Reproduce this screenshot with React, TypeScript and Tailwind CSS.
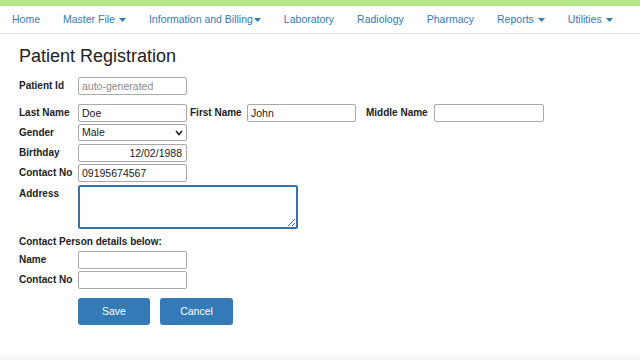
import React from "react";

const navItems = [
  { label: "Home", caret: false },
  { label: "Master File", caret: true },
  { label: "Information and Billing", caret: true, tight: true },
  { label: "Laboratory", caret: false },
  { label: "Radiology", caret: false },
  { label: "Pharmacy", caret: false },
  { label: "Reports", caret: true },
  { label: "Utilities", caret: true },
];

function Caret() {
  return (
    <svg width="7" height="4" viewBox="0 0 7 4" className="inline-block">
      <path d="M0 0 L7 0 L3.5 4 Z" fill="#337ab7" />
    </svg>
  );
}

function Field({ value = "", placeholder, className = "" }: { value?: string; placeholder?: string; className?: string }) {
  return (
    <input
      readOnly
      defaultValue={value}
      placeholder={placeholder}
      className={`h-[18px] rounded-[2px] border border-[#a9a9a9] bg-white px-[3px] text-[10.5px] text-[#222] placeholder:text-[#8a8a8a] outline-none ${className}`}
    />
  );
}

function Label({ children, className = "" }: { children: React.ReactNode; className?: string }) {
  return <div className={`pt-[2px] text-[10px] font-bold leading-[14px] text-[#222] ${className}`}>{children}</div>;
}

export default function App() {
  return (
    <div className="flex min-h-screen flex-col bg-white font-['Liberation_Sans',Arial,sans-serif]">
      <div className="h-[6px] bg-[#b4e68c]" />
      <nav className="flex h-[28px] items-center gap-[23px] border-b border-[#e6e6e6] pl-[12px] pt-[1px] text-[10.5px] text-[#337ab7]">
        {navItems.map((item) => (
          <span key={item.label} className="flex items-center">
            {item.label}
            {item.caret && <span className={item.tight ? "ml-[1px]" : "ml-[4px]"}><Caret /></span>}
          </span>
        ))}
      </nav>

      <main className="flex-1 pl-[19px]">
        <h1 className="mt-[10px] text-[18px] leading-[24px] text-[#222]">Patient Registration</h1>

        <div className="mt-[9px] flex flex-col">
          <div className="flex items-start">
            <Label className="w-[59px]">Patient Id</Label>
            <Field placeholder="auto-generated" className="w-[109px]" />
          </div>

          <div className="mt-[9px] flex items-start">
            <Label className="w-[59px]">Last Name</Label>
            <Field value="Doe" className="w-[109px]" />
            <Label className="ml-[3px] w-[57px]">First Name</Label>
            <Field value="John" className="w-[109px]" />
            <Label className="ml-[10px] w-[68px]">Middle Name</Label>
            <Field className="w-[110px]" />
          </div>

          <div className="mt-[2px] flex items-start">
            <Label className="w-[59px]">Gender</Label>
            <div className="relative flex h-[17px] w-[109px] items-center rounded-[2px] border border-[#a9a9a9] bg-white px-[3px] text-[10.5px] text-[#222]">
              Male
              <svg width="8" height="6" viewBox="0 0 8 6" className="absolute right-[3px] top-[5px]">
                <path d="M1 1 L4 4.5 L7 1" stroke="#222" strokeWidth="1.6" fill="none" />
              </svg>
            </div>
          </div>

          <div className="mt-[3px] flex items-start">
            <Label className="w-[59px]">Birthday</Label>
            <Field value="12/02/1988" className="w-[109px] pr-[4px] text-right" />
          </div>

          <div className="mt-[2px] flex items-start">
            <Label className="w-[59px]">Contact No</Label>
            <Field value="09195674567" className="w-[109px]" />
          </div>

          <div className="mt-[3px] flex items-start">
            <Label className="w-[59px]">Address</Label>
            <textarea
              readOnly
              className="h-[44px] w-[220px] rounded-[2px] border-2 border-[#3b74ad] bg-white outline-none"
            />
          </div>

          <div className="mt-[6px] text-[10px] font-bold leading-[14px] text-[#222]">Contact Person details below:</div>

          <div className="mt-[2px] flex items-start">
            <Label className="w-[59px]">Name</Label>
            <Field className="w-[109px]" />
          </div>

          <div className="mt-[2px] flex items-start">
            <Label className="w-[59px]">Contact No</Label>
            <Field className="w-[109px]" />
          </div>

          <div className="mt-[9px] flex gap-[10px] pl-[59px]">
            <button className="h-[27px] w-[72px] rounded-[3px] bg-[#337ab7] text-[10.5px] text-white">Save</button>
            <button className="h-[27px] w-[73px] rounded-[3px] bg-[#337ab7] text-[10.5px] text-white">Cancel</button>
          </div>
        </div>
      </main>

      <div className="h-[8px] bg-gradient-to-b from-white to-[#f3f3f3]" />
    </div>
  );
}
